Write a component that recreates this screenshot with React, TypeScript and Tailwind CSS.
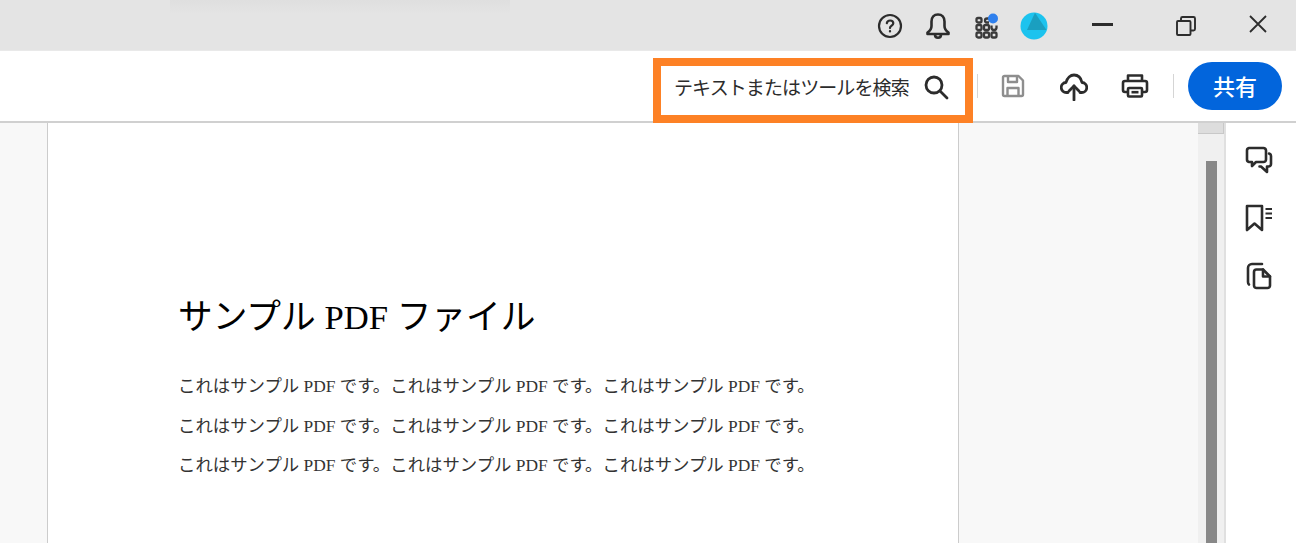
import React from 'react';

const Slot = ({ w, children }: { w: string; children: React.ReactNode }) => (
  <div className={`flex items-center justify-center ${w}`}>{children}</div>
);

const HelpIcon = () => (
  <svg width="26" height="26" viewBox="0 0 26 26" fill="none" stroke="#2c2c2c" strokeWidth="2.200" strokeLinecap="round">
    <circle cx="13" cy="13" r="11" />
    <path d="M9.800 10.200c.3-1.800 1.600-2.700 3.300-2.700 1.900 0 3.200 1.100 3.200 2.700 0 2.400-3.300 2.500-3.300 4.900" />
    <circle cx="13" cy="18.300" r=".6" fill="#2c2c2c" strokeWidth="1.200" />
  </svg>
);

const BellIcon = () => (
  <svg width="26" height="28" viewBox="0 0 26 28" fill="none" stroke="#2c2c2c" strokeWidth="2.600" strokeLinejoin="round">
    <path d="M13 2.500c-4 0-6.500 2.800-6.500 7v4.500c0 3-1.200 4.700-4 6.500v1.500h21v-1.500c-2.800-1.800-4-3.500-4-6.500V9.500c0-4.200-2.500-7-6.500-7z" />
    <path d="M10 22.500c0 2 1.300 3.200 3 3.200s3-1.200 3-3.200" />
  </svg>
);

const AppsIcon = () => (
  <svg width="26" height="26" viewBox="0 0 26 26" fill="none" stroke="#3a3a3a" strokeWidth="2.300">
    <rect x="2.500" y="5" width="5" height="4.500" rx="1.500" />
    <path d="M15 5.500h-2a2 2 0 0 0 0 4h2" />
    <rect x="2.500" y="12" width="5" height="5" rx="1.500" />
    <rect x="10" y="12" width="5" height="5" rx="1.500" />
    <path d="M17.500 12.500v2a2.500 2.500 0 0 0 5 0v-2" />
    <rect x="2.500" y="19.500" width="5" height="5" rx="1.500" />
    <rect x="10" y="19.500" width="5" height="5" rx="1.500" />
    <rect x="17.500" y="19.500" width="5" height="5" rx="1.500" />
    <circle cx="19" cy="5.500" r="5" fill="#2f80ed" stroke="none" />
  </svg>
);

const AvatarIcon = () => (
  <svg width="28" height="28" viewBox="0 0 28 28">
    <circle cx="14" cy="14" r="13.500" fill="#1cc3ee" />
    <path d="M15 .8 26.500 18H7z" fill="#1a9fc0" />
  </svg>
);

const RestoreIcon = () => (
  <svg width="20" height="20" viewBox="0 0 20 20" fill="none" stroke="#2c2c2c" strokeWidth="1.900">
    <rect x="1" y="5" width="13.500" height="14" rx="1" />
    <path d="M5 5V2.500A1.500 1.500 0 0 1 6.500 1h11A1.500 1.500 0 0 1 19 2.500V13a1.500 1.500 0 0 1-1.500 1.500h-3" />
  </svg>
);

const SearchIcon = () => (
  <svg width="26" height="26" viewBox="0 0 26 26" fill="none" stroke="#2c2c2c" strokeWidth="2.800" strokeLinecap="round">
    <circle cx="11" cy="11" r="8" />
    <path d="m17 17 7 7" />
  </svg>
);

const SaveIcon = () => (
  <svg width="26" height="26" viewBox="0 0 26 26" fill="none" stroke="#8e8e8e" strokeWidth="2.400" strokeLinejoin="round">
    <path d="M3 4.500A1.500 1.500 0 0 1 4.500 3h14L23 7.500v14a1.500 1.500 0 0 1-1.500 1.500h-17A1.500 1.500 0 0 1 3 21.500z" />
    <path d="M8 3v6h9V3" />
    <path d="M7.500 23v-8h11v8" />
  </svg>
);

const UploadIcon = () => (
  <svg width="28" height="28" viewBox="0 0 28 28" fill="none" stroke="#2c2c2c" strokeWidth="2.800" strokeLinecap="round" strokeLinejoin="round">
    <path d="M8 19.500H6.500a5 5 0 0 1-.5-10C7.200 5 10.500 2 14 2c4 0 7 3 8 7.500a5 5 0 0 1-.5 10H20" />
    <path d="M14 27V13" />
    <path d="m9 18 5-5 5 5" />
  </svg>
);

const PrintIcon = () => (
  <svg width="28" height="26" viewBox="0 0 28 26" fill="none" stroke="#2c2c2c" strokeWidth="2.600" strokeLinejoin="round">
    <path d="M7 8V2.500h14V8" />
    <path d="M7 19H4a2 2 0 0 1-2-2V10a2 2 0 0 1 2-2h20a2 2 0 0 1 2 2v7a2 2 0 0 1-2 2h-3" />
    <rect x="7" y="15" width="14" height="8.500" rx="1" />
    <path d="M10.500 19.200h7" />
  </svg>
);

const CommentsIcon = () => (
  <svg width="28" height="28" viewBox="0 0 28 28" fill="none" stroke="#2c2c2c" strokeWidth="2.600" strokeLinejoin="round" strokeLinecap="round">
    <path d="M4 2h14.500A2.500 2.500 0 0 1 21 4.500v9a2.500 2.500 0 0 1-2.500 2.500H11l-4 4v-4H4a2.500 2.500 0 0 1-2-2.500v-9A2.500 2.500 0 0 1 4 2z" />
    <path d="M24 7.500c1.200.3 2 1.200 2 2.500v8a2.500 2.500 0 0 1-2.500 2.500H22V26l-6-5.500h-1.500" />
  </svg>
);

const BookmarksIcon = () => (
  <svg width="28" height="28" viewBox="0 0 28 28" fill="none" stroke="#2c2c2c" strokeWidth="2.600" strokeLinejoin="round">
    <path d="M2 2h15v24l-7.500-6.500L2 26z" />
    <path d="M20.500 5h6.500M20.500 9.500h6.500M20.500 14h6.500" strokeWidth="2.200" />
  </svg>
);

const PagesIcon = () => (
  <svg width="26" height="28" viewBox="0 0 26 28" fill="none" stroke="#2c2c2c" strokeWidth="2.600" strokeLinejoin="round" strokeLinecap="round">
    <path d="M16 2H6a4 4 0 0 0-4 4v14c0 1.200.4 2 1 2.500" />
    <path d="M8 10a2.500 2.500 0 0 1 2.500-2.500H17l7 7v9a2.500 2.500 0 0 1-2.500 2.500h-11A2.500 2.500 0 0 1 8 23.500z" />
    <path d="M17 7.500v7h7" />
  </svg>
);

const serif = "font-['Liberation_Serif','Noto_Sans_CJK_JP',serif]";

export default function App() {
  return (
    <div className="h-[543px] w-full overflow-hidden bg-white font-['Noto_Sans_CJK_JP','Noto_Sans',sans-serif]">
      {/* Title bar */}
      <div className="flex h-[51px] border-b border-[#e9e9e9] bg-[#e4e4e4]">
        <div className="ml-[170px] h-[14px] w-[340px] bg-gradient-to-b from-[#dfdfdf] to-[#e4e4e4]" />
        <div className="ml-auto flex pr-[5px] pt-[1px]">
          <Slot w="w-[48px]"><HelpIcon /></Slot>
          <Slot w="w-[48px]"><BellIcon /></Slot>
          <Slot w="w-[49px]"><AppsIcon /></Slot>
          <Slot w="w-[46px]"><AvatarIcon /></Slot>
          <Slot w="w-[90px]"><div className="mb-[3px] h-[3px] w-[21px] bg-[#2c2c2c]" /></Slot>
          <Slot w="w-[78px]"><RestoreIcon /></Slot>
          <Slot w="w-[66px]">
            <svg width="20" height="20" viewBox="0 0 20 20" className="mb-[3px]" stroke="#2c2c2c" strokeWidth="1.800">
              <path d="m2 2 16 16M18 2 2 18" />
            </svg>
          </Slot>
        </div>
      </div>

      {/* Toolbar */}
      <div className="flex h-[72px] items-center justify-end border-b-2 border-[#d0d0d0] pr-[14px]">
        <div className="relative z-10 -mb-[2px] flex h-[65px] w-[320px] items-center self-end border-[8px] border-[#fd8125] pb-[8px] pl-[13px]">
          <span className="text-[19px] leading-none tracking-[-0.9px] text-[#2c2c2c]">テキストまたはツールを検索</span>
          <span className="ml-[14px]"><SearchIcon /></span>
        </div>
        <div className="ml-[4px] h-[24px] w-px bg-[#d5d5d5]" />
        <Slot w="ml-[5px] w-[60px]"><SaveIcon /></Slot>
        <Slot w="ml-px w-[60px] pt-[2px]"><UploadIcon /></Slot>
        <Slot w="ml-px w-[60px]"><PrintIcon /></Slot>
        <div className="ml-[8px] h-[24px] w-px bg-[#d5d5d5]" />
        <button className="ml-[14px] h-[48px] w-[94px] rounded-full bg-[#0265dc] pb-[2px] text-[22px] leading-none font-medium text-white">共有</button>
      </div>

      {/* Document area */}
      <div className="flex h-[420px]">
        <div className="w-[47px] bg-[#f8f8f8]" />
        <div className={`w-[912px] border-x border-[#cccccc] bg-white pl-[130px] pt-[175px] text-black ${serif}`}>
          <h1 className="text-[34.7px] leading-[40px]">サンプル PDF ファイル</h1>
          <div className="mt-[29px] text-[17.4px] leading-[39.5px] text-[#333333]">
            <p>これはサンプル PDF です。これはサンプル PDF です。これはサンプル PDF です。</p>
            <p>これはサンプル PDF です。これはサンプル PDF です。これはサンプル PDF です。</p>
            <p>これはサンプル PDF です。これはサンプル PDF です。これはサンプル PDF です。</p>
          </div>
        </div>
        <div className="flex-1 bg-[#f8f8f8]" />

        {/* Scrollbar */}
        <div className="w-[26px] bg-[#f0f0f0]">
          <div className="h-[11px] border-b border-r border-[#c8c8c8] bg-[#dddddd]" />
          <div className="ml-[8px] mt-[27px] h-[400px] w-[11px] bg-[#888888]" />
        </div>

        {/* Right rail */}
        <div className="flex w-[72px] flex-col items-center border-l-2 border-[#e0e0e0] pt-[23px] pr-[5px]">
          <CommentsIcon />
          <div className="mt-[30px]"><BookmarksIcon /></div>
          <div className="mt-[30px]"><PagesIcon /></div>
        </div>
      </div>
    </div>
  );
}
